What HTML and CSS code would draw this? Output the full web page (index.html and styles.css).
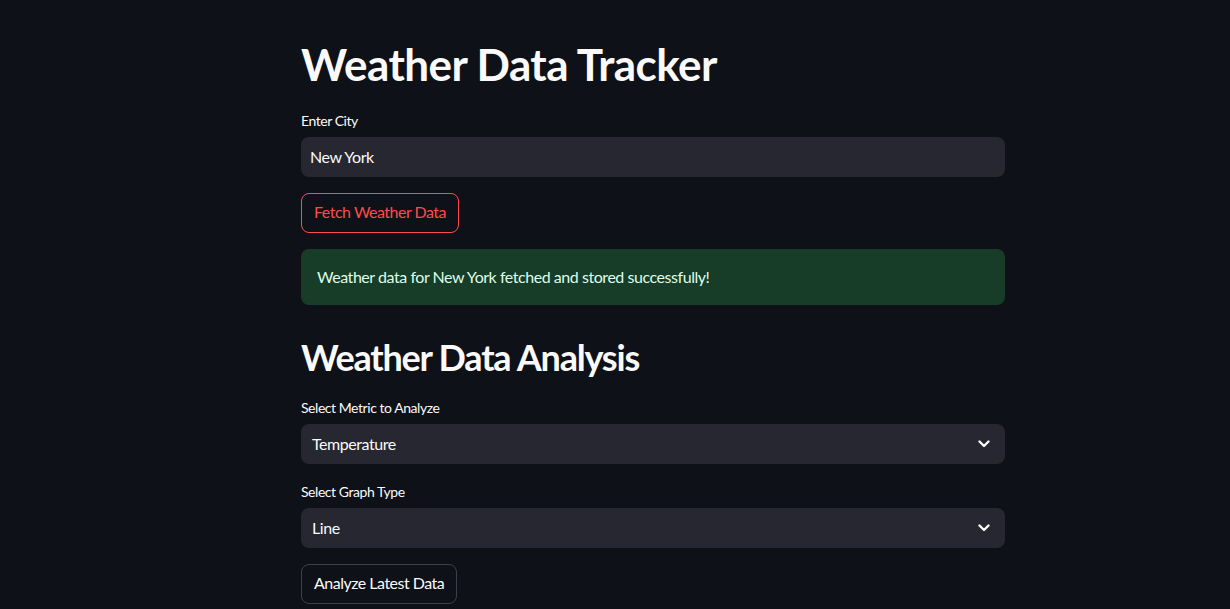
FILE: index.html
```html
<!DOCTYPE html>
<html lang="en">
<head>
<meta charset="utf-8">
<title>Weather Data Tracker</title>
<link rel="stylesheet" href="styles.css">
</head>
<body>
<main class="main">
  <h1 class="title">Weather Data Tracker</h1>
  <div class="widget">
    <label class="label">Enter City</label>
    <div class="input">New York</div>
  </div>
  <button class="btn btn-primary">Fetch Weather Data</button>
  <div class="alert">Weather data for New York fetched and stored successfully!</div>
  <h2 class="subtitle">Weather Data Analysis</h2>
  <div class="widget">
    <label class="label">Select Metric to Analyze</label>
    <div class="select">
      <span>Temperature</span>
      <svg class="chev" width="12" height="8" viewBox="0 0 12 8"><path d="M1.5 1.5 L6 6 L10.5 1.5" fill="none" stroke="#fafafa" stroke-width="2.4" stroke-linecap="round" stroke-linejoin="round"/></svg>
    </div>
  </div>
  <div class="widget">
    <label class="label">Select Graph Type</label>
    <div class="select">
      <span>Line</span>
      <svg class="chev" width="12" height="8" viewBox="0 0 12 8"><path d="M1.5 1.5 L6 6 L10.5 1.5" fill="none" stroke="#fafafa" stroke-width="2.4" stroke-linecap="round" stroke-linejoin="round"/></svg>
    </div>
  </div>
  <button class="btn btn-secondary">Analyze Latest Data</button>
</main>
</body>
</html>
```

FILE: styles.css
```css
html, body {
  margin: 0;
  padding: 0;
  background: #0e1117;
  height: 100%;
  overflow: hidden;
}
body {
  font-family: Lato, "Noto Sans", sans-serif;
  color: #fafafa;
  letter-spacing: -0.45px;
}
.main {
  width: 704px;
  margin-left: 301px;
  padding-top: 38px;
  display: flex;
  flex-direction: column;
  align-items: flex-start;
  gap: 16px;
}
.title {
  margin: 0;
  font-size: 44px;
  line-height: 53px;
  font-weight: 700;
  letter-spacing: -0.55px;
  padding-bottom: 2px;
}
.subtitle {
  margin: 15px 0 0 0;
  font-size: 36px;
  line-height: 43px;
  font-weight: 700;
  letter-spacing: -1.2px;
  padding-bottom: 1px;
}
.widget {
  width: 100%;
  display: flex;
  flex-direction: column;
}
.label {
  font-size: 14px;
  height: 24px;
  line-height: 24px;
  margin-bottom: 4px;
}
.input, .select {
  box-sizing: border-box;
  height: 40px;
  width: 100%;
  background: #262730;
  border-radius: 8px;
  font-size: 16px;
  display: flex;
  align-items: center;
  padding-bottom: 2px;
}
.input {
  padding-left: 9px;
}
.select {
  padding-left: 11px;
  padding-right: 15px;
  justify-content: space-between;
}
.chev {
  margin-top: 2px;
}
.btn {
  box-sizing: border-box;
  height: 40px;
  padding: 0 12px 3px;
  border-radius: 8px;
  background: transparent;
  font-family: inherit;
  font-size: 16px;
  letter-spacing: -0.5px;
}
.btn-primary {
  border: 1px solid #ff4b4b;
  color: #ff4b4b;
}
.btn-secondary {
  border: 1px solid #3d4047;
  color: #fafafa;
}
.alert {
  box-sizing: border-box;
  width: 100%;
  height: 56px;
  padding: 0 16px 2px;
  display: flex;
  align-items: center;
  border-radius: 8px;
  background: #173c28;
  color: #dffde9;
  font-size: 16px;
}
```
